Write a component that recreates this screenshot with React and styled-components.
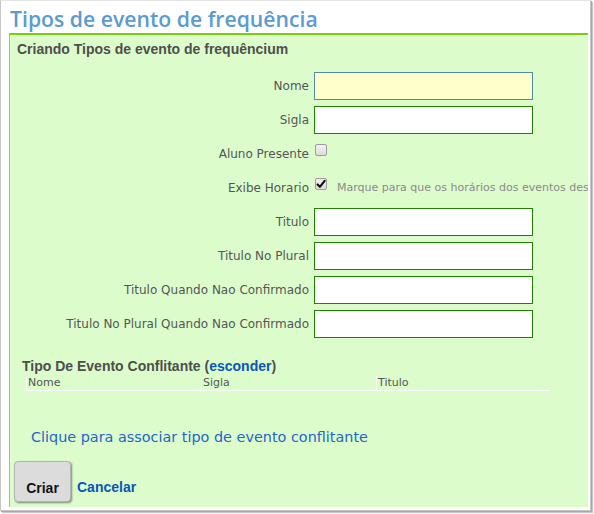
import React from 'react';
import styled, { createGlobalStyle } from 'styled-components';

const Global = createGlobalStyle`
  html, body { margin: 0; padding: 0; background: #fff; }
  body { width: 594px; height: 514px; overflow: hidden; font-family: "DejaVu Sans", Verdana, sans-serif; }
  * { box-sizing: border-box; }
`;

const Window = styled.div`
  width: 591px;
  height: 511px;
  border: 1px solid #c6c6c6;
  border-top-color: #e4e4e4;
  box-shadow: 1px 1px 0 #a8a8a8, 2px 2px 1px rgba(0, 0, 0, 0.22);
  background: #fff;
  padding: 0 2px 3px 8px;
  display: flex;
  flex-direction: column;
`;

const Title = styled.h1`
  margin: 0;
  height: 32px;
  line-height: 36px;
  padding-left: 1px;
  font-family: "Open Sans", sans-serif;
  font-weight: 600;
  font-size: 21.2px;
  color: #5b9bcf;
  white-space: nowrap;
`;

const Panel = styled.div`
  flex: 1;
  background: #dcfdcb;
  border-top: 2px solid #7bcc0c;
  border-left: 1px solid #92d54a;
  overflow: hidden;
  display: flex;
  flex-direction: column;
`;

const SubTitle = styled.h2`
  margin: 0;
  height: 27px;
  line-height: 28px;
  padding-left: 7px;
  font-family: "Liberation Sans", Arial, sans-serif;
  font-weight: 700;
  font-size: 14px;
  color: #4e4e4e;
  white-space: nowrap;
`;

const Form = styled.div`
  margin-top: 10px;
  display: grid;
  grid-template-columns: 299px 219px;
  grid-auto-rows: 28px;
  column-gap: 5px;
  row-gap: 6px;
`;

const Label = styled.label`
  align-self: center;
  text-align: right;
  font-size: 12px;
  color: #555;
  white-space: nowrap;
`;

const Input = styled.input`
  width: 219px;
  height: 28px;
  margin: 0;
  padding: 2px 4px;
  border: 1px solid ${p => (p.$focus ? '#4f8c9e' : '#1f8200')};
  background: ${p => (p.$focus ? '#ffffcc' : '#fff')};
  outline: none;
  font-family: inherit;
  font-size: 12px;
`;

const CheckCell = styled.div`
  display: flex;
  align-items: flex-start;
  padding-top: 4px;
  padding-left: 1px;
  white-space: nowrap;
  overflow: visible;
`;

const Box = styled.span`
  width: 12px;
  height: 12px;
  flex: none;
  border: 1px solid #9c9c9c;
  border-radius: 2px;
  background: linear-gradient(#f2f2f2, #dcdcdc);
  display: flex;
  align-items: center;
  justify-content: center;
`;

const Hint = styled.span`
  margin-left: 10px;
  margin-top: 3px;
  font-size: 11px;
  color: #8a8a8a;
`;

const Section = styled.div`
  margin-top: 20px;
  padding-left: 12px;
  font-family: "Liberation Sans", Arial, sans-serif;
  font-weight: 700;
  font-size: 14px;
  line-height: 17px;
  color: #4e4e4e;
  white-space: nowrap;
`;

const BlueStrong = styled.a`
  color: #0a55b8;
  text-decoration: none;
`;

const Table = styled.div`
  margin-left: 16px;
  width: 524px;
  display: grid;
  grid-template-columns: 175px 175px 174px;
  border-bottom: 1px solid #fff;
  margin-top: 1px;
`;

const Th = styled.div`
  height: 14px;
  line-height: 14px;
  border-left: 1px solid #fff;
  padding-left: 1px;
  font-size: 11px;
  color: #555;
`;

const AssocLink = styled.a`
  display: block;
  margin-top: 38px;
  padding-left: 21px;
  font-size: 14.4px;
  line-height: 17px;
  color: #2465c9;
  text-decoration: none;
  white-space: nowrap;
`;

const Actions = styled.div`
  margin-top: 15px;
  padding-left: 4px;
  display: flex;
  align-items: flex-end;
  gap: 6px;
`;

const Button = styled.button`
  width: 57px;
  height: 41px;
  margin: 0;
  padding: 13px 0 0;
  border: 1px solid #b4b4b4;
  border-radius: 4px;
  background: #dcdcdc;
  box-shadow: 1px 1px 2px rgba(0, 0, 0, 0.45);
  font-family: "Liberation Sans", Arial, sans-serif;
  font-weight: 700;
  font-size: 14px;
  color: #111;
`;

const Cancel = styled.a`
  margin-bottom: 7px;
  font-family: "Liberation Sans", Arial, sans-serif;
  font-weight: 700;
  font-size: 14px;
  color: #0a55b8;
  text-decoration: none;
`;

function Check({ checked }) {
  return (
    <Box>
      {checked && (
        <svg width="10" height="10" viewBox="0 0 10 10">
          <path d="M1.6 5.4 L3.9 7.8 L8.6 1.8" fill="none" stroke="#111" strokeWidth="2.1" strokeLinecap="round" strokeLinejoin="round" />
        </svg>
      )}
    </Box>
  );
}

export default function App() {
  return (
    <>
      <Global />
      <Window>
        <Title>Tipos de evento de frequência</Title>
        <Panel>
          <SubTitle>Criando Tipos de evento de frequêncium</SubTitle>
          <Form>
            <Label>Nome</Label>
            <Input $focus />
            <Label>Sigla</Label>
            <Input />
            <Label>Aluno Presente</Label>
            <CheckCell><Check /></CheckCell>
            <Label>Exibe Horario</Label>
            <CheckCell>
              <Check checked />
              <Hint>Marque para que os horários dos eventos desse tipo sejam exibidos</Hint>
            </CheckCell>
            <Label>Titulo</Label>
            <Input />
            <Label>Titulo No Plural</Label>
            <Input />
            <Label>Titulo Quando Nao Confirmado</Label>
            <Input />
            <Label>Titulo No Plural Quando Nao Confirmado</Label>
            <Input />
          </Form>
          <Section>
            Tipo De Evento Conflitante (<BlueStrong href="#">esconder</BlueStrong>)
          </Section>
          <Table>
            <Th>Nome</Th>
            <Th>Sigla</Th>
            <Th>Titulo</Th>
          </Table>
          <AssocLink href="#">Clique para associar tipo de evento conflitante</AssocLink>
          <Actions>
            <Button>Criar</Button>
            <Cancel href="#">Cancelar</Cancel>
          </Actions>
        </Panel>
      </Window>
    </>
  );
}
